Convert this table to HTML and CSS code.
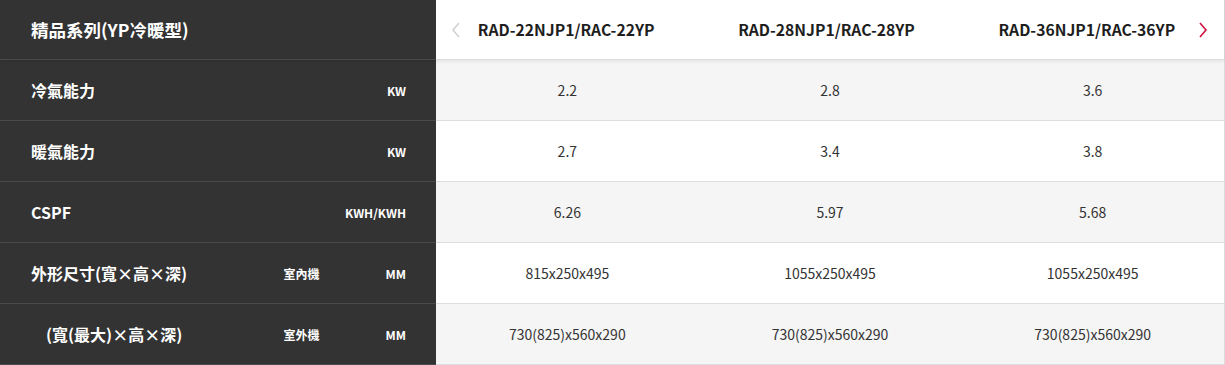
FILE: index.html
```html
<!DOCTYPE html>
<html lang="zh-Hant">
<head>
<meta charset="utf-8">
<link rel="stylesheet" href="styles.css">
</head>
<body>
<div class="spec">
  <div class="row head">
    <div class="side"><span class="label title">精品系列(YP冷暖型)</span></div>
    <div class="cell model">RAD-22NJP1/RAC-22YP</div>
    <div class="cell model">RAD-28NJP1/RAC-28YP</div>
    <div class="cell model">RAD-36NJP1/RAC-36YP</div>
    <span class="nav prev"><svg width="10" height="16" viewBox="0 0 10 16"><polyline points="8,1 2,8 8,15" fill="none" stroke="#cfcfcf" stroke-width="1.4"/></svg></span>
    <span class="nav next"><svg width="10" height="16" viewBox="0 0 10 16"><polyline points="2,1 8,8 2,15" fill="none" stroke="#d1113f" stroke-width="1.6"/></svg></span>
  </div>
  <div class="row gray">
    <div class="side"><span class="label">冷氣能力</span><span class="unit">KW</span></div>
    <div class="cell">2.2</div><div class="cell">2.8</div><div class="cell">3.6</div>
  </div>
  <div class="row">
    <div class="side"><span class="label">暖氣能力</span><span class="unit">KW</span></div>
    <div class="cell">2.7</div><div class="cell">3.4</div><div class="cell">3.8</div>
  </div>
  <div class="row gray">
    <div class="side"><span class="label">CSPF</span><span class="unit">KWH/KWH</span></div>
    <div class="cell">6.26</div><div class="cell">5.97</div><div class="cell">5.68</div>
  </div>
  <div class="row">
    <div class="side"><span class="label">外形尺寸(寬×高×深)</span><span class="sub">室內機</span><span class="unit">MM</span></div>
    <div class="cell">815x250x495</div><div class="cell">1055x250x495</div><div class="cell">1055x250x495</div>
  </div>
  <div class="row gray">
    <div class="side"><span class="label indent">(寬(最大)×高×深)</span><span class="sub">室外機</span><span class="unit">MM</span></div>
    <div class="cell">730(825)x560x290</div><div class="cell">730(825)x560x290</div><div class="cell">730(825)x560x290</div>
  </div>
</div>
</body>
</html>
```
FILE: styles.css
```css
html, body {
  margin: 0;
  padding: 0;
  background: #ffffff;
}
body {
  font-family: "Noto Sans CJK TC", "Noto Sans", sans-serif;
  width: 1225px;
  height: 365px;
  overflow: hidden;
}
.spec {
  width: 1224px;
  border-right: 1px solid #dcdcdc;
}
.row {
  display: grid;
  grid-template-columns: 436px repeat(3, 1fr);
  height: 60px;
  border-bottom: 1px solid #dddddd;
  background: #ffffff;
  position: relative;
}
.row.gray {
  background: #f5f5f5;
}
.row.head {
  height: 59px;
  z-index: 2;
  padding-right: 7px;
  box-shadow: 0 1px 4px rgba(0, 0, 0, 0.09);
}
.side {
  background: #333333;
  color: #ffffff;
  display: flex;
  align-items: center;
  padding: 0 30px 0 31px;
  border-bottom: 1px solid #4a4a4a;
  margin-bottom: -1px;
  font-weight: 700;
}
.label {
  flex: 1;
  font-size: 16px;
}
.label.title {
  font-size: 17.5px;
}
.label.indent {
  padding-left: 15px;
}
.sub {
  width: 102px;
  font-size: 12px;
}
.unit {
  font-size: 12px;
  text-align: right;
}
.cell {
  display: flex;
  align-items: center;
  justify-content: center;
  font-size: 14px;
  color: #333333;
}
.cell.model {
  font-size: 15.7px;
  font-weight: 700;
  color: #1e1e1e;
}
.nav {
  position: absolute;
  top: 22px;
  display: flex;
}
.nav.prev {
  left: 451px;
}
.nav.next {
  left: 1198px;
}
```
